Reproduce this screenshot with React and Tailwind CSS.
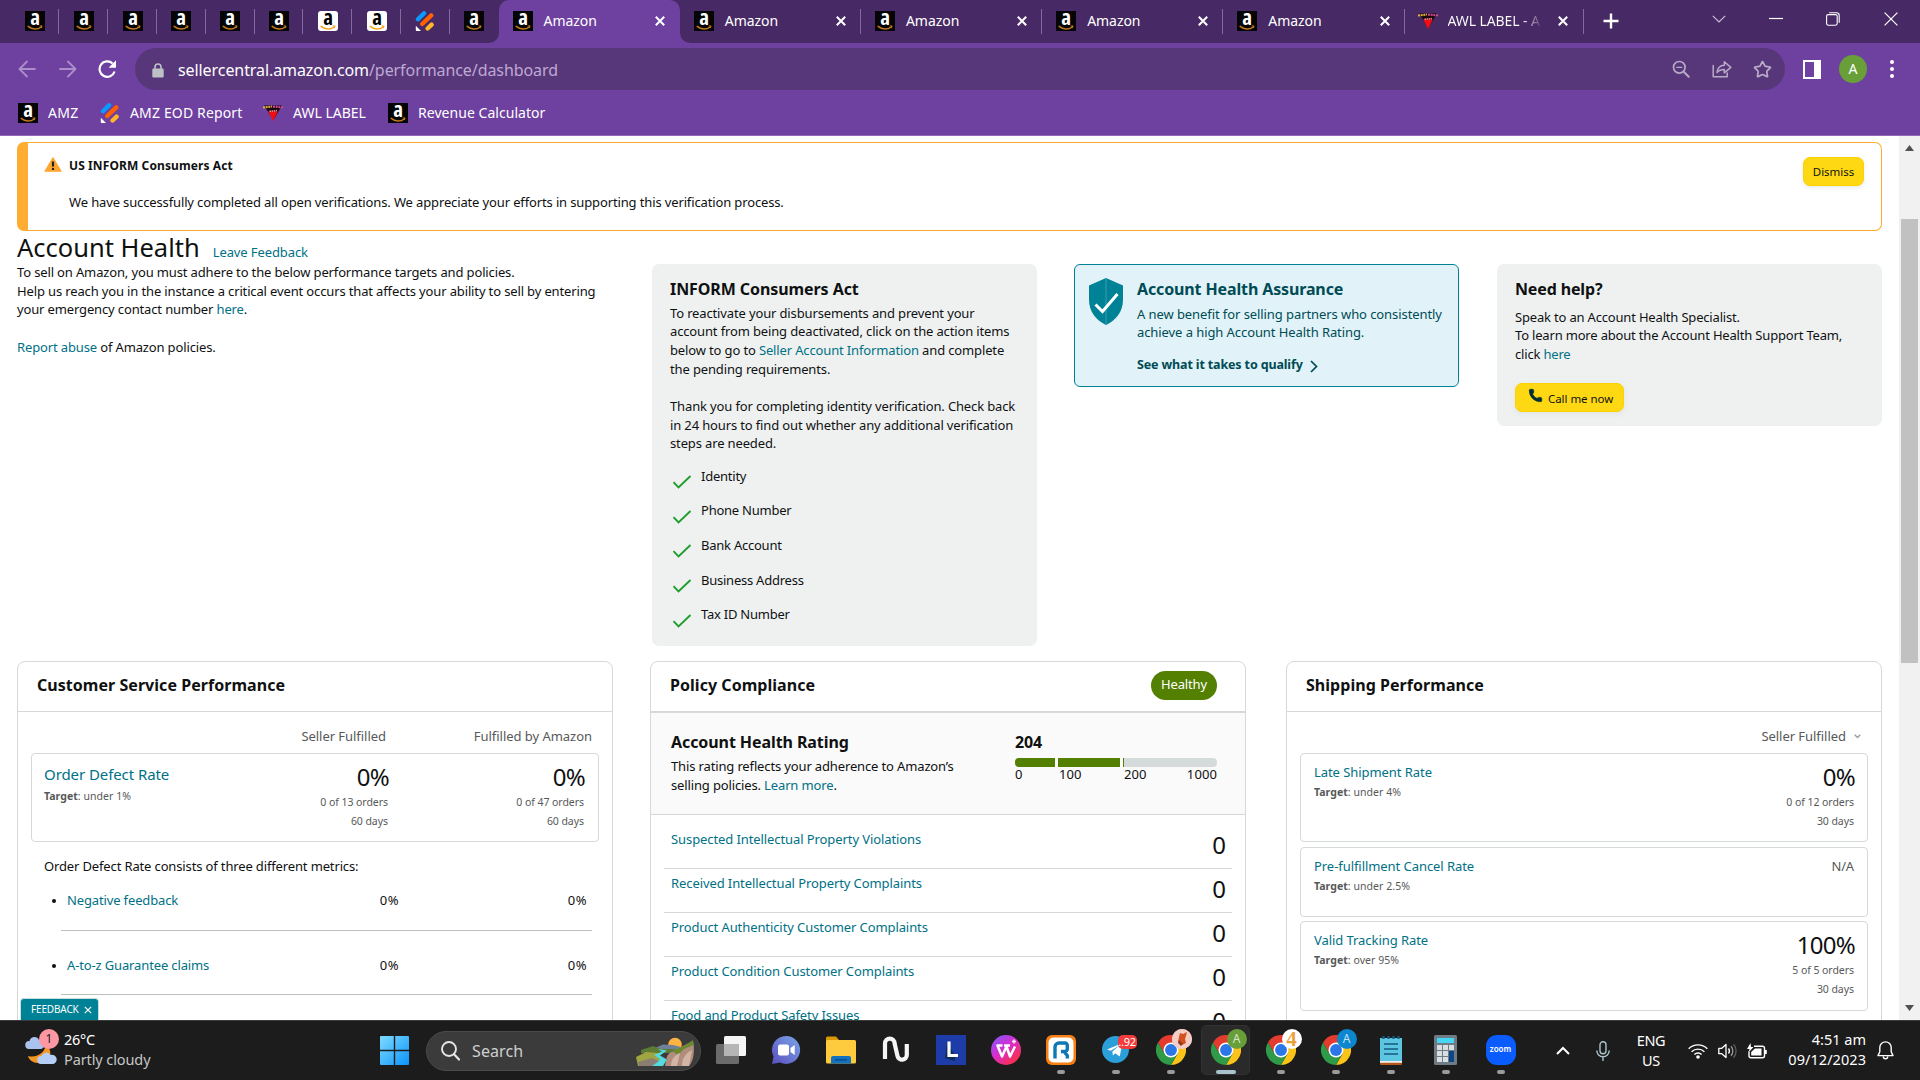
import { Phone, Star } from 'lucide-react';

const ICON_LINE = { fill: 'none', stroke: 'currentColor', strokeLinecap: 'round', strokeLinejoin: 'round' };

function AmazonIcon({ light = false }) {
  return (
    <svg width="20" height="20" viewBox="0 0 20 20" className="shrink-0 overflow-visible">
      <rect width="20" height="20" rx={light ? 3 : 0} fill={light ? '#ffffff' : '#050505'} />
      <text x="10" y="13.500" textAnchor="middle" className="font-['Open_Sans',sans-serif] text-[21px] font-bold [font-stretch:85%]" fill={light ? '#000000' : '#ffffff'}>a</text>
      <path d="M3.200 15.400c4 3.400 9.400 3.400 13 .6" fill="none" stroke={light ? '#f7a31c' : '#c47a1c'} strokeWidth="1.500" strokeLinecap="round" />
      <path d="M14.600 15l2.500-.1-.8 2.200" fill="none" stroke={light ? '#f7a31c' : '#c47a1c'} strokeWidth="1" />
    </svg>
  );
}

function FormIcon() {
  return (
    <svg width="20" height="20" viewBox="0 0 20 20" className="shrink-0">
      <g strokeLinecap="round" strokeWidth="4.400">
        <path d="M3 8.200L9 2.300" stroke="#0a99ff" />
        <path d="M7.200 13L16.300 4.400" stroke="#ff6100" />
        <path d="M12.600 17.500l4-3.800" stroke="#ffb629" />
      </g>
      <path d="M.8 14.800v4.400q0 .8.8.8H6z" fill="#fff" />
    </svg>
  );
}

function AwlIcon() {
  return (
    <svg width="20" height="20" viewBox="0 0 20 20" className="shrink-0">
      <path d="M1 2.500h18L10.500 17z" fill="#1a0a10" />
      <path d="M5.200 8.500h9.600L10.200 18z" fill="#f20d12" />
      <path d="M0 4.500l9-1" stroke="#e0b13c" strokeWidth="2" strokeDasharray="2 .7" />
      <path d="M10 3.700l10 .6" stroke="#d24a94" strokeWidth="2" strokeDasharray="2 .7" />
      <path d="M6.500 8.300l7.500-.7" stroke="#ff8d92" strokeWidth="1.500" strokeDasharray="1.600 .6" />
    </svg>
  );
}

function CloseX() {
  return (
    <svg width="12" height="12" viewBox="0 0 12 12" className="shrink-0 text-white">
      <path d="M1.800 1.800l8.400 8.400M10.200 1.800l-8.400 8.400" stroke="currentColor" strokeWidth="2" fill="none" />
    </svg>
  );
}

const PINNED = ['a', 'a', 'a', 'a', 'a', 'a', 'light', 'light', 'form', 'a'];

function PinnedTab({ kind, divider }) {
  return (
    <div className="relative flex w-[48.8px] items-center justify-center pb-px">
      {kind === 'form' ? <FormIcon /> : <AmazonIcon light={kind === 'light'} />}
      {divider && <span className="absolute top-[9px] right-0 h-[25px] w-px bg-[#83699d]" />}
    </div>
  );
}

function WideTab({ title, divider }) {
  return (
    <div className="relative flex w-[181.200px] items-center pb-px pl-[14px]">
      <AmazonIcon />
      <span className="mb-px ml-[11px] flex-1 text-[14px] leading-5 tracking-[-0.050px]">{title}</span>
      <span className="mr-[14px] flex"><CloseX /></span>
      {divider && <span className="absolute top-[9px] right-0 h-[25px] w-px bg-[#83699d]" />}
    </div>
  );
}

function TabStrip() {
  return (
    <div className="flex h-[43px] shrink-0 bg-[#6e40a0] text-white">
      <div className="flex w-[498.600px] shrink-0 rounded-br-[10px] bg-[#472a65] pl-[10.600px]">
        {PINNED.map((k, i) => <PinnedTab key={i} kind={k} divider={i < 9} />)}
      </div>
      <div className="flex shrink-0 bg-[linear-gradient(#472a65_50%,#6e40a0_50%)]">
        <div className="flex rounded-t-[10px] bg-[#6e40a0]"><WideTab title="Amazon" /></div>
      </div>
      <div className="flex flex-1 rounded-bl-[10px] bg-[#472a65]">
        <WideTab title="Amazon" divider />
        <WideTab title="Amazon" divider />
        <WideTab title="Amazon" divider />
        <WideTab title="Amazon" divider />
        <div className="relative flex w-[179px] items-center pb-px pl-[13px]">
          <AwlIcon />
          <span className="mb-px ml-[10px] w-[98px] overflow-hidden bg-[linear-gradient(90deg,#fff_76%,transparent_97%)] bg-clip-text text-[14px] leading-5 tracking-[-0.100px] whitespace-nowrap text-transparent">AWL LABEL - A</span>
          <span className="ml-[11px] flex"><CloseX /></span>
          <span className="absolute top-[9px] right-0 h-[25px] w-px bg-[#83699d]" />
        </div>
        <div className="flex w-[54px] items-center justify-center pb-px">
          <svg width="16" height="16" viewBox="0 0 16 16"><path d="M8 .5v15M.5 8h15" stroke="#fff" strokeWidth="2.400" /></svg>
        </div>
        <div className="mb-[5px] ml-auto flex items-center pr-[22px]">
          <svg width="14" height="8" viewBox="0 0 14 8" className="mr-[43px]"><path d="M.8.8L7 7 13.200.8" stroke="#c9bdd6" strokeWidth="1.200" fill="none" /></svg>
          <svg width="14" height="8" viewBox="0 0 14 8" className="mr-[43px]"><path d="M0 3.500h14" stroke="#fff" strokeWidth="1.200" /></svg>
          <svg width="14" height="14" viewBox="0 0 14 14" className="mr-[44px]"><g fill="none" stroke="#fff" strokeWidth="1.100"><rect x=".6" y="2.600" width="10.600" height="10.600" rx="1.600" /><path d="M3.200.8h7.400a2.600 2.600 0 0 1 2.600 2.600v7.400" /></g></svg>
          <svg width="14" height="14" viewBox="0 0 14 14"><path d="M.6.6l12.800 12.800M13.400.6L.6 13.400" stroke="#fff" strokeWidth="1.200" /></svg>
        </div>
      </div>
    </div>
  );
}

function Toolbar() {
  return (
    <div className="flex h-[52px] shrink-0 items-center bg-[#6e40a0] text-white">
      <svg width="18" height="18" viewBox="0 0 18 18" className="ml-[18px] text-[#ab8fca]"><path d="M17 9H2M9 1.500L1.500 9 9 16.500" {...ICON_LINE} strokeWidth="1.800" /></svg>
      <svg width="18" height="18" viewBox="0 0 18 18" className="ml-[23px] text-[#ab8fca]"><path d="M1 9h15M9 1.500L16.500 9 9 16.500" {...ICON_LINE} strokeWidth="1.800" /></svg>
      <svg width="19" height="18" viewBox="0 0 19 18" className="ml-[21px]"><path d="M16.600 11.500A7.700 7.700 0 1 1 14.600 3.500" fill="none" stroke="#fff" strokeWidth="2.200" /><path d="M18 .3v7.400h-7.400z" fill="#fff" /></svg>
      <div className="ml-[18px] flex h-[42px] w-[1650px] items-center rounded-full bg-[#57377a]">
        <svg width="12" height="15" viewBox="0 0 12 15" className="mt-[2px] ml-[17px]"><path d="M3 6V4a3 3 0 0 1 6 0v2" fill="none" stroke="#bdc1c6" strokeWidth="1.600" /><rect x=".3" y="5.500" width="11.400" height="9" rx="1.300" fill="#bdc1c6" /></svg>
        <span className="mt-px ml-[14px] text-[16px] leading-6 tracking-[-0.080px]">sellercentral.amazon.com<span className="text-[#bda9d3]">/performance/dashboard</span></span>
        <svg width="18" height="18" viewBox="0 0 18 18" className="mr-[22px] ml-auto text-[#b9aac8]"><g {...ICON_LINE} strokeWidth="1.700"><circle cx="7.300" cy="7.300" r="5.800" /><path d="M11.700 11.700l5 5" strokeWidth="2" /><path d="M4.800 7.300h5" strokeWidth="1.300" /></g></svg>
        <svg width="20" height="18" viewBox="0 0 20 18" className="mr-[21px] text-[#b9aac8]"><g {...ICON_LINE} strokeWidth="1.500"><path d="M1.200 5.500v11.300h14V13" /><path d="M5 12.500c.5-4.500 3-7 7.300-7.200V1.800l6.500 5.600-6.500 5.400V9.400c-3.300 0-5.500.8-7.300 3.100z" /></g></svg>
        <Star size={19} strokeWidth={2.200} className="mr-[13px] text-[#b9aac8]" />
      </div>
      <div className="ml-[18px] h-[19px] w-[18px] border-2 border-r-[7px] border-white" />
      <div className="ml-[18px] flex size-7 items-center justify-center rounded-full bg-[#689f38] text-[14px] leading-none">A</div>
      <div className="ml-[23px] flex flex-col gap-[3px]">
        <span className="size-[4px] rounded-full bg-white" /><span className="size-[4px] rounded-full bg-white" /><span className="size-[4px] rounded-full bg-white" />
      </div>
    </div>
  );
}

function Bookmarks() {
  return (
    <div className="flex h-[41px] shrink-0 items-center border-b border-[#9368ba] bg-[#6e40a0] pb-[5px] pl-[18px] text-[14px] leading-5 text-white">
      <AmazonIcon /><span className="ml-[10px] w-[52px] tracking-[0.300px]">AMZ</span>
      <FormIcon /><span className="ml-[10px] w-[133px] tracking-[0.150px]">AMZ EOD Report</span>
      <AwlIcon /><span className="ml-[10px] w-[95px]">AWL LABEL</span>
      <AmazonIcon /><span className="ml-[10px] tracking-[0.040px]">Revenue Calculator</span>
    </div>
  );
}

function Alert() {
  return (
    <div className="mt-[6px] flex h-[89px] shrink-0 rounded-[7px] border border-l-[11px] border-[#ffac33]">
      <svg width="18" height="15" viewBox="0 0 18 15" className="mt-[14px] ml-[16px]"><path d="M9 .8L17 14.200H1z" fill="#ffa62f" stroke="#ffa62f" strokeWidth="1.200" strokeLinejoin="round" /><path d="M9 4.500v5" stroke="#222" strokeWidth="2.200" /><circle cx="9" cy="11.900" r="1.200" fill="#222" /></svg>
      <div className="ml-[7px] flex-1">
        <p className="mt-[13px] text-[12px] leading-5 font-bold tracking-[0.100px]">US INFORM Consumers Act</p>
        <p className="mt-[16px] text-[13px] leading-5 tracking-[-0.135px]">We have successfully completed all open verifications. We appreciate your efforts in supporting this verification process.</p>
      </div>
      <button className="mt-[14px] mr-[17px] h-[29px] w-[61px] rounded-[7px] border border-[#fcd200] bg-[#ffd814] text-[11.500px] tracking-[-0.050px] shadow-[0_2px_4px_rgba(213,217,217,0.500)]">Dismiss</button>
    </div>
  );
}

const Link = ({ children }) => <a className="text-[#007185]">{children}</a>;

const CHECKS = ['Identity', 'Phone Number', 'Bank Account', 'Business Address', 'Tax ID Number'];

function TopCards() {
  return (
    <div className="flex h-[383px] shrink-0 items-start text-[13px] leading-[18.700px] tracking-[-0.140px]">
      <div className="w-[598px]">
        To sell on Amazon, you must adhere to the below performance targets and policies.<br />
        Help us reach you in the instance a critical event occurs that affects your ability to sell by entering<br />
        your emergency contact number <Link>here</Link>.<br /><br />
        <Link>Report abuse</Link> of Amazon policies.
      </div>
      <div className="mt-px ml-[37px] h-[382px] w-[385px] rounded-[7px] bg-[#eff1f1] pt-[15px] pl-[18px]">
        <h3 className="text-[16px] leading-5 font-bold tracking-[-0.080px]">INFORM Consumers Act</h3>
        <p className="mt-[4.500px] whitespace-nowrap">
          To reactivate your disbursements and prevent your<br />
          account from being deactivated, click on the action items<br />
          below to go to <Link>Seller Account Information</Link> and complete<br />
          the pending requirements.<br /><br />
          Thank you for completing identity verification. Check back<br />
          in 24 hours to find out whether any additional verification<br />
          steps are needed.
        </p>
        <ul className="mt-[5.500px]">
          {CHECKS.map((c) => (
            <li key={c} className="flex h-[34.700px] items-center">
              <svg width="20" height="14" viewBox="0 0 20 14" className="mt-[12px] ml-[2px]"><path d="M1.500 7.200l5 5.200L18.500 1" fill="none" stroke="#1f9d2c" strokeWidth="1.900" /></svg>
              <span className="ml-[9px] tracking-[-0.240px]">{c}</span>
            </li>
          ))}
        </ul>
      </div>
      <div className="mt-px ml-[37px] flex h-[123px] w-[385px] rounded-[6px] border border-[#008296] bg-[#e1f3f8] text-[#004b55]">
        <svg width="34" height="47" viewBox="0 0 34 47" className="mt-[13px] ml-[14px]"><path d="M17 0l17 7.500v14C34 34 27 42 17 47 7 42 0 34 0 21.500v-14z" fill="#008296" /><path d="M17 0v47" stroke="#3ba0b0" strokeWidth="1" /><path d="M6.500 26.500l7 7L28.500 16" fill="none" stroke="#fff" strokeWidth="3" /></svg>
        <div className="ml-[14px] whitespace-nowrap">
          <h3 className="mt-[14px] text-[16px] leading-5 font-bold tracking-[-0.130px]">Account Health Assurance</h3>
          <p className="mt-[6px] leading-[18.300px] tracking-[-0.080px]">A new benefit for selling partners who consistently<br />achieve a high Account Health Rating.</p>
          <p className="mt-[14px] flex items-center text-[12.500px] font-bold">See what it takes to qualify
            <svg width="8" height="13" viewBox="0 0 8 13" className="mt-[3px] ml-[7px]"><path d="M1 1l5.500 5.500L1 12" fill="none" stroke="currentColor" strokeWidth="1.700" /></svg>
          </p>
        </div>
      </div>
      <div className="mt-px ml-[38px] h-[162px] w-[385px] rounded-[7px] bg-[#eff1f1] pt-[15px] pl-[18px]">
        <h3 className="text-[16px] leading-5 font-bold">Need help?</h3>
        <p className="mt-[8.500px] whitespace-nowrap tracking-[-0.180px]">Speak to an Account Health Specialist.<br />To learn more about the Account Health Support Team,<br />click <Link>here</Link></p>
        <button className="mt-[19.500px] flex h-[29px] w-[109px] items-center rounded-[7px] border border-[#fcd200] bg-[#ffd814] pl-[12px] text-[11.500px] tracking-[-0.050px] shadow-[0_2px_4px_rgba(213,217,217,0.500)]">
          <Phone size={15} fill="#002f36" stroke="#002f36" strokeWidth={1} className="mb-[4px]" />
          <span className="mt-[3px] ml-[5px]">Call me now</span>
        </button>
      </div>
    </div>
  );
}

function Stat({ value, lines, className }) {
  return (
    <div className={`text-right ${className}`}>
      <p className="-mr-px text-[24px] leading-[26px] tracking-[-0.700px] text-[#0f1111]">{value}</p>
      <div className="mt-[3px] text-[10.500px] leading-[19px] tracking-[-0.050px] text-[#565959]">{lines.map((l) => <p key={l}>{l}</p>)}</div>
    </div>
  );
}

function Card({ title, badge, children, thick }) {
  return (
    <section className="h-[380px] w-[596px] shrink-0 rounded-t-[8px] border border-[#d5d9d9] tracking-[-0.140px]">
      <header className={`flex items-start justify-between border-[#d5d9d9] pl-[19px] ${thick ? 'h-[51px] border-b-2' : 'h-[50px] border-b'}`}>
        <h2 className="mt-[13px] text-[16px] leading-5 font-bold tracking-[0.040px]">{title}</h2>
        {badge}
      </header>
      {children}
    </section>
  );
}

function MetricLine({ name }) {
  return (
    <div className="flex items-center leading-5">
      <span className="mt-[2px] mr-[11px] size-[4px] rounded-full bg-[#0f1111]" />
      <Link>{name}</Link>
      <span className="ml-auto tracking-[0.500px]">0%</span>
      <span className="w-[188px] text-right tracking-[0.500px]">0%</span>
    </div>
  );
}

function CustomerService() {
  return (
    <Card title="Customer Service Performance">
      <div className="mt-[14px] flex pr-[20px] text-[13px] leading-5 tracking-[-0.040px] text-[#565959]">
        <span className="ml-auto">Seller Fulfilled</span>
        <span className="w-[206px] text-right">Fulfilled by Amazon</span>
      </div>
      <div className="mx-[13px] mt-[7px] flex h-[89px] rounded-[4px] border border-[#d5d9d9] pl-[12px]">
        <div>
          <p className="mt-[10px] text-[15px] leading-5 tracking-[-0.080px]"><Link>Order Defect Rate</Link></p>
          <p className="mt-[3px] text-[10.500px] leading-[18px] tracking-[0.050px] text-[#565959]"><b>Target</b>: under 1%</p>
        </div>
        <Stat className="mt-[10px] ml-auto" value="0%" lines={['0 of 13 orders', '60 days']} />
        <Stat className="mt-[10px] mr-[14px] w-[196px]" value="0%" lines={['0 of 47 orders', '60 days']} />
      </div>
      <div className="pr-[20px] pl-[26px] text-[13px]">
        <p className="mt-[14px] leading-5">Order Defect Rate consists of three different metrics:</p>
        <div className="mt-[14px] pr-[5px] pl-[8px]"><MetricLine name="Negative feedback" /></div>
        <div className="mt-[20px] ml-[17px] h-px bg-[#bbbfbf]" />
        <div className="mt-[24px] pr-[5px] pl-[8px]"><MetricLine name="A-to-z Guarantee claims" /></div>
        <div className="mt-[19px] ml-[17px] h-px bg-[#bbbfbf]" />
      </div>
    </Card>
  );
}

const POLICIES = [
  'Suspected Intellectual Property Violations',
  'Received Intellectual Property Complaints',
  'Product Authenticity Customer Complaints',
  'Product Condition Customer Complaints',
  'Food and Product Safety Issues',
];

function PolicyCompliance() {
  return (
    <Card title="Policy Compliance" thick badge={<span className="mt-[9px] mr-[28px] h-[29px] w-[66px] rounded-full bg-[#538000] text-center text-[13px] leading-[27px] text-white">Healthy</span>}>
      <div className="flex h-[102px] border-b border-[#d5d9d9] bg-[#fafafa] pl-[20px]">
        <div className="w-[344px]">
          <h3 className="mt-[19px] text-[16px] leading-5 font-bold tracking-[-0.080px]">Account Health Rating</h3>
          <p className="mt-[5px] text-[13px] leading-[18.700px]">This rating reflects your adherence to Amazon’s<br />selling policies. <Link>Learn more</Link>.</p>
        </div>
        <div className="w-[202px]">
          <p className="mt-[19px] text-[16px] leading-5 font-bold">204</p>
          <div className="mt-[6px] flex h-[9px] gap-[3px] overflow-hidden rounded-[4px] bg-white">
            <span className="w-[40px] bg-[#538000]" />
            <span className="w-[62px] bg-[#538000]" />
            <span className="flex-1 border-l border-[#538000] bg-[#d5dbdb]" />
          </div>
          <div className="-mt-px flex text-[13px] leading-[17px] tracking-[0.100px]">
            <span className="w-[44px]">0</span><span className="w-[65px]">100</span><span>200</span><span className="ml-auto">1000</span>
          </div>
        </div>
      </div>
      <ul className="mx-[13px] mt-[10px]">
        {POLICIES.map((p) => (
          <li key={p} className="flex h-[44px] justify-between border-b border-[#d5d9d9] pr-[6px] pl-[7px]">
            <span className="mt-[4px] text-[13px] leading-5 tracking-[-0.090px]"><Link>{p}</Link></span>
            <span className="mt-[7px] text-[24px] leading-[26px] tracking-[0]">0</span>
          </li>
        ))}
      </ul>
    </Card>
  );
}

function ShipBox({ name, target, className, children }) {
  return (
    <div className={`mx-[13px] flex justify-between rounded-[4px] border border-[#d5d9d9] pr-[13px] pl-[13px] ${className}`}>
      <div>
        <p className="mt-[8px] text-[13px] leading-5 tracking-[-0.060px]"><Link>{name}</Link></p>
        <p className="mt-px text-[10.500px] leading-[18px] tracking-[0.050px] text-[#565959]"><b>Target</b>: {target}</p>
      </div>
      {children}
    </div>
  );
}

function Shipping() {
  return (
    <Card title="Shipping Performance">
      <div className="mt-[14px] flex items-center justify-end pr-[20px] text-[13px] leading-5 tracking-[-0.040px] text-[#565959]">
        Seller Fulfilled
        <svg width="7" height="5" viewBox="0 0 7 5" className="ml-[8px]"><path d="M.7.8l2.800 2.700L6.300.8" fill="none" stroke="#9a9d9d" strokeWidth="1.400" /></svg>
      </div>
      <ShipBox name="Late Shipment Rate" target="under 4%" className="mt-[7px] h-[89px]"><Stat className="mt-[10px]" value="0%" lines={['0 of 12 orders', '30 days']} /></ShipBox>
      <ShipBox name="Pre-fulfillment Cancel Rate" target="under 2.5%" className="mt-[5px] h-[70px]"><span className="mt-[8px] text-[13px] leading-5 text-[#565959]">N/A</span></ShipBox>
      <ShipBox name="Valid Tracking Rate" target="over 95%" className="mt-[4px] h-[90px]"><Stat className="mt-[10px]" value="100%" lines={['5 of 5 orders', '30 days']} /></ShipBox>
    </Card>
  );
}

function Page() {
  return (
    <div className="relative flex min-h-0 flex-1 bg-white text-[#0f1111]">
      <main className="flex min-w-0 flex-1 flex-col overflow-hidden pr-[17px] pl-[17px]">
        <Alert />
        <div className="mt-px mb-px flex h-[30px] shrink-0 items-baseline">
          <h1 className="text-[25.500px] leading-[30px]">Account Health</h1>
          <span className="ml-[13px] text-[13px] tracking-[-0.100px]"><Link>Leave Feedback</Link></span>
        </div>
        <TopCards />
        <div className="mt-[15px] flex shrink-0 gap-[37px]">
          <CustomerService />
          <PolicyCompliance />
          <div className="ml-[3px]"><Shipping /></div>
        </div>
      </main>
      <div className="flex w-[21px] flex-col items-center bg-[#f1f1f1]">
        <svg width="9" height="6" viewBox="0 0 9 6" className="mt-[9px]"><path d="M4.500 0L9 6H0z" fill="#505050" /></svg>
        <div className="mt-[68px] h-[444px] w-[17px] bg-[#c1c1c1]" />
        <svg width="9" height="6" viewBox="0 0 9 6" className="mt-auto mb-[9px]"><path d="M0 0h9L4.500 6z" fill="#505050" /></svg>
      </div>
      <div className="absolute bottom-0 left-[20px] flex h-[22px] w-[79px] items-center rounded-t-[4px] border border-b-0 border-[#c8dfe2] bg-[#008296] pl-[10px] text-[10px] text-white">
        <span className="tracking-[-0.150px]">FEEDBACK</span>
        <svg width="8" height="8" viewBox="0 0 8 8" className="ml-[5px]"><path d="M.8.8l6.400 6.400M7.200.8L.8 7.200" stroke="#fff" strokeWidth="1.200" /></svg>
      </div>
    </div>
  );
}

function ChromeIcon({ badge, bg, fg }) {
  return (
    <div className="relative size-[30px]">
      <svg width="30" height="30" viewBox="0 0 48 48">
        <path d="M3.200 12A24 24 0 0 1 44.800 12L24 12 13.600 30z" fill="#e33b2e" />
        <path d="M44.800 12A24 24 0 0 1 24 48L34.400 30 24 12z" fill="#fcc418" />
        <path d="M24 48A24 24 0 0 1 3.200 12L13.600 30h20.800z" fill="#2f9a48" />
        <circle cx="24" cy="24" r="12" fill="#fff" /><circle cx="24" cy="24" r="9.500" fill="#2c77e8" />
      </svg>
      <span className={`absolute -top-[6px] left-[16px] flex size-5 items-center justify-center rounded-full text-[12px] leading-none ${bg} ${fg}`}>{badge}</span>
    </div>
  );
}

const PhotoMark = () => (
  <svg width="20" height="20" viewBox="0 0 20 20"><circle cx="10" cy="10" r="10" fill="#f4cdc6" /><path d="M8 4l3 1 4-2-1 4-1 3 1 4-4 2-4-3 1-5z" fill="#d4521f" /><path d="M7 11l4 4-2 2-3-3z" fill="#8a3a20" /></svg>
);

const RUNNING_ICONS = [
  { key: 'task', el: <svg width="30" height="28" viewBox="0 0 30 28"><rect x="8" y="0" width="22" height="20" rx="1.500" fill="#f4f4f4" /><rect x="0" y="8" width="23" height="20" rx="1.500" fill="#6b6b6b" /><path d="M8 8h15v12H8z" fill="#b5b5b5" /></svg> },
  { key: 'chat', el: <svg width="30" height="30" viewBox="0 0 30 30"><defs><linearGradient id="chat" x1="0" y1="1" x2="1" y2="0"><stop stopColor="#5b4fc0" /><stop offset="1" stopColor="#7aa5e8" /></linearGradient></defs><path d="M15 1a14 14 0 1 1-6 26.600L1 29l1.500-7.500A14 14 0 0 1 15 1z" fill="url(#chat)" /><rect x="7" y="9.500" width="11" height="11" rx="2" fill="#fff" /><path d="M19.500 13l4.200-3v10l-4.200-3z" fill="#fff" /></svg> },
  { key: 'files', el: <svg width="30" height="28" viewBox="0 0 30 28"><path d="M0 2a1.500 1.500 0 0 1 1.500-1.500h8.500l3 3.500v6H0z" fill="#d99a06" /><rect x="0" y="4" width="30" height="23.500" rx="1.500" fill="#fecb3e" /><path d="M5 27.500V22a2 2 0 0 1 2-2h16a2 2 0 0 1 2 2v5.500z" fill="#1272bf" /><path d="M9 23.800h12" stroke="#0a4d8c" strokeWidth="1.500" /></svg> },
  { key: 'nord', el: <svg width="28" height="28" viewBox="0 0 28 28"><path d="M3 23V7.500a4.800 4.800 0 0 1 9.600 0L15.500 20a4.700 4.700 0 0 0 9.300-1V8" fill="none" stroke="#f5f5f5" strokeWidth="4.200" /></svg> },
  { key: 'l', el: <svg width="30" height="30" viewBox="0 0 30 30"><rect width="30" height="30" fill="#1e3ca8" /><path d="M11 7l-2 16 10 3V21z" fill="#0d2d57" /><path d="M13 6.500V20.500h9" fill="none" stroke="#fff" strokeWidth="3.200" /></svg> },
  { key: 'wps', el: <svg width="30" height="30" viewBox="0 0 30 30"><defs><linearGradient id="wps" x1="0" y1="0" x2=".8" y2="1"><stop stopColor="#7a5cff" /><stop offset=".5" stopColor="#d92ccd" /><stop offset="1" stopColor="#ff3038" /></linearGradient></defs><circle cx="15" cy="15" r="15" fill="url(#wps)" /><path d="M11.500 10.500H6.500l4.500 11 4.500-10 3.500 10L24 11.500M13 10.500h6" fill="none" stroke="#fff" strokeWidth="2.500" strokeLinejoin="round" /><path d="M23 4.500v4M21 6.500h4" stroke="#fff" strokeWidth="1.300" /></svg> },
  { key: 'rc', dot: true, el: <svg width="30" height="30" viewBox="0 0 30 30"><rect width="30" height="30" rx="6" fill="#f77f13" /><rect x="2.500" y="2.500" width="25" height="25" rx="5" fill="#fff" /><path d="M9 23.500V12a4 4 0 0 1 4-4H19a2.300 2.300 0 0 1 2.300 2.300v3.700a2.500 2.500 0 0 1-2.500 2.500H15M18 16.500l3.300 4v3" fill="none" stroke="#0e79b2" strokeWidth="3.400" /></svg> },
  { key: 'tg', dot: true, el: <div className="relative size-[28px]"><svg width="27" height="27" viewBox="0 0 27 27"><circle cx="13.500" cy="13.500" r="13.500" fill="#2b9fd9" /><path d="M5 13.500L20.500 7l-2.800 13.500-4.500-3.300-2.300 2.200-.5-4 7-6-8.700 5.400z" fill="#fff" /></svg><span className="absolute -top-[1px] left-[16px] h-[14px] w-[19px] rounded-[5px] bg-[#f23b3a] text-center text-[11px] leading-[14px] tracking-[-0.300px] text-white">..92</span></div> },
  { key: 'c1', dot: true, el: <ChromeIcon badge={<PhotoMark />} bg="bg-[#f2c9c0]" fg="text-white" /> },
  { key: 'c2', active: true, el: <ChromeIcon badge="A" bg="bg-[#689f38]" fg="text-[#d5e5c8]" /> },
  { key: 'c3', dot: true, el: <ChromeIcon badge={<span className="font-['Liberation_Serif',serif] text-[21px] font-bold">4</span>} bg="bg-white" fg="text-[#e9a23b]" /> },
  { key: 'c4', dot: true, el: <ChromeIcon badge="A" bg="bg-[#0c86cf]" fg="text-[#bfe2f7]" /> },
  { key: 'note', dot: true, el: <svg width="22" height="30" viewBox="0 0 22 30"><rect y="3" width="22" height="24" fill="#5cc5e0" /><rect y="26" width="22" height="2" fill="#f0f0f0" /><rect y="27.800" width="22" height="2.200" rx="1" fill="#b3591c" /><g stroke="#155a80" strokeWidth="1.600"><path d="M4 9h14M4 14h14M4 19h14" /><path d="M3.500 1v3M8.500 1v3M13.500 1v3M18.500 1v3" strokeWidth="2.200" /></g></svg> },
  { key: 'calc', dot: true, el: <svg width="23" height="30" viewBox="0 0 23 30"><rect width="23" height="30" rx="1.500" fill="#6f7b85" /><rect x="3" y="3" width="17" height="5" fill="#45d5f5" /><g fill="#d9dee2"><path d="M3 10h5v5H3zM9 10h5v5H9zM15 10h5v5h-5zM3 16h5v5H3zM9 16h5v5H9zM3 22h5v5H3zM9 22h5v5H9z" /></g><path d="M15 16h5v11h-5z" fill="#0d4585" /></svg> },
  { key: 'zoom', dot: true, el: <span className="flex size-[30px] items-center justify-center rounded-[11px] bg-[#0b5cff] pb-[2px] text-[8px] leading-none font-semibold text-white">zoom</span> },
];

function Taskbar() {
  return (
    <footer className="flex h-[60px] shrink-0 items-center border-t border-[#383c38] bg-[#1c1c1c] text-[15px] text-white">
      <div className="flex w-[380px] items-center pb-[2px] pl-[24px]">
        <div className="relative">
          <svg width="34" height="34" viewBox="0 0 34 34"><path d="M22 12a10 10 0 0 1-8 18c-5 0-9-3-10-7 8 2 16-2 18-11z" fill="#f4961f" /><path d="M5 16a4 4 0 0 1 .500-8 5 5 0 0 1 9.500-1 4.500 4.500 0 0 1 2 9z" fill="#a9c3ee" /><path d="M17 31a4 4 0 0 1 .500-8 5 5 0 0 1 9-1 4.500 4.500 0 0 1 3 9z" fill="#b4cef5" /></svg>
          <span className="absolute -top-[4px] left-[15px] flex size-5 items-center justify-center rounded-full bg-[#fc97a3] text-[12px] leading-none text-[#1c1c1c]">1</span>
        </div>
        <div className="mb-px ml-[6px] text-[14.500px] leading-5"><p className="tracking-[-0.300px]">26°C</p><p className="tracking-[-0.100px] text-[#c6c6c6]">Partly cloudy</p></div>
      </div>
      <svg width="29" height="29" viewBox="0 0 29 29"><defs><linearGradient id="win" x1="0" y1="0" x2="1" y2="1"><stop stopColor="#7fdcff" /><stop offset="1" stopColor="#0a93fb" /></linearGradient></defs><path d="M1 0h12.800v13.800H0V1a1 1 0 0 1 1-1zM15.200 0H28a1 1 0 0 1 1 1v12.800H15.200zM0 15.200h13.800V29H1a1 1 0 0 1-1-1zM15.200 15.200H29V28a1 1 0 0 1-1 1H15.200z" fill="url(#win)" /></svg>
      <div className="ml-[17px] flex h-[40px] w-[275px] items-center rounded-full border border-[#4b4b4b] bg-[#3b3b3b] pl-[14px]">
        <svg width="19" height="20" viewBox="0 0 19 20"><circle cx="8" cy="8" r="7" fill="none" stroke="#e6e6e6" strokeWidth="1.900" /><path d="M13 13.200l5 5.300" stroke="#e6e6e6" strokeWidth="2.200" strokeLinecap="round" /></svg>
        <span className="ml-[12px] text-[16px] tracking-[0.100px] text-[#cfcfcf]">Search</span>
        <svg width="62" height="30" viewBox="0 0 62 30" className="mr-[2px] ml-auto">
          <circle cx="39" cy="8.500" r="6.800" fill="#ffb340" />
          <path d="M19 12l8-3.500 10 .5 8 2-4 4H18z" fill="#71809a" />
          <path d="M5 14l12-4 8 3 16 0-8 4-28 0z" fill="#5d7b32" />
          <path d="M0 21l10-5 12 1 4 5-12 8H2z" fill="#9fa541" />
          <path d="M22 13l9 1.500-7 5 7 4-4 6.500H15l9-7-6-4 8-3.500z" fill="#53dbe0" />
          <path d="M2 26l14-4 7 3-7 5H3z" fill="#8c7d72" />
          <path d="M30 25c1-9 6-9 11-12l16-8c2 8 1 20-4 25H29z" fill="#b08d7d" />
          <path d="M36 15l12-5 9-6 .5 5-9.500 4-6 6z" fill="#6b8a2e" />
          <path d="M35 30c0-7 4-11 9-13l-3 13zM46 30c0-8 4-13 10-16l-3 16z" fill="#d3b5a5" />
        </svg>
      </div>
      <div className="ml-[2px] flex">
        {RUNNING_ICONS.map((it) => (
          <div key={it.key} className="relative flex h-[59px] w-[55px] items-center justify-center pb-px">
            {it.active && <span className="absolute top-[4px] left-[3px] h-[50px] w-[49px] rounded-[5px] border border-[#313131] bg-[#2a2a2a]" />}
            <span className="relative flex">{it.el}</span>
            {it.dot && <span className="absolute bottom-[6px] left-[24px] h-[4px] w-[8px] rounded-full bg-[#9a9a9a]" />}
            {it.active && <span className="absolute bottom-[6px] left-[18px] h-[4px] w-[20px] rounded-full bg-[#a9c4cc]" />}
          </div>
        ))}
      </div>
      <div className="ml-[15px] flex w-[40px] justify-center"><svg width="14" height="9" viewBox="0 0 14 9"><path d="M1 8l6-6 6 6" fill="none" stroke="#fff" strokeWidth="2" /></svg></div>
      <div className="flex w-[40px] justify-center"><svg width="14" height="20" viewBox="0 0 14 20"><g fill="none" stroke="#a9c4cc" strokeWidth="1.400"><rect x="4" y=".8" width="6" height="12" rx="3" /><path d="M.8 9.500a6.200 6.200 0 0 0 12.400 0M7 15.800V20" /></g></svg></div>
      <div className="mb-px w-[56px] text-center text-[14.500px] leading-5 tracking-[-0.300px]"><p>ENG</p><p>US</p></div>
      <div className="flex w-[38px] justify-center"><svg width="20" height="16" viewBox="0 0 20 16"><g fill="none" stroke="#fff" strokeWidth="1.400"><path d="M.7 5.800a13 13 0 0 1 18.600 0M3.600 8.800a9 9 0 0 1 12.800 0M6.400 11.600a5 5 0 0 1 7.200 0" /></g><circle cx="10" cy="14" r="1.800" fill="#fff" /></svg></div>
      <div className="flex w-[22px] justify-center"><svg width="20" height="16" viewBox="0 0 20 16"><g fill="none" strokeWidth="1.300"><path d="M.8 5.300h3L8 1.500v13l-4.200-3.800h-3z" stroke="#fff" strokeLinejoin="round" /><path d="M10.500 5.500a4 4 0 0 1 0 5" stroke="#fff" /><path d="M13 3.300a7 7 0 0 1 0 9.400" stroke="#9a9a9a" /><path d="M15.500 1.300a10 10 0 0 1 0 13.400" stroke="#5c5c5c" /></g></svg></div>
      <div className="flex w-[36px] justify-center"><svg width="20" height="16" viewBox="0 0 20 16"><path d="M7 3.200h8.500a2 2 0 0 1 2 2v7.600a2 2 0 0 1-2 2H4a2 2 0 0 1-2-2V8.500" fill="none" stroke="#fff" strokeWidth="1.400" /><path d="M8 5.500h6.500V12.500H4.200V9z" fill="#fff" /><path d="M18 7h1.800v4H18zM3.500 0L0 6h2.500L1.500 9.500 6.500 4H4z" fill="#fff" /></svg></div>
      <div className="mb-[3px] w-[91px] text-right text-[14.500px] leading-5 whitespace-nowrap"><p>4:51 am</p><p className="tracking-[0.050px]">09/12/2023</p></div>
      <div className="flex w-[38px] justify-center"><svg width="17" height="19" viewBox="0 0 17 19"><path d="M8.500.9a5.700 5.700 0 0 0-5.700 5.700v4.200L1 14.600h15l-1.800-3.800V6.600A5.700 5.700 0 0 0 8.500.9zM6.300 15.500a2.200 2.200 0 0 0 4.400 0" fill="none" stroke="#fff" strokeWidth="1.400" strokeLinejoin="round" /></svg></div>
    </footer>
  );
}

export default function App() {
  return (
    <div className="flex h-[1080px] w-[1920px] flex-col overflow-hidden font-['Noto_Sans','Open_Sans',sans-serif]">
      <TabStrip />
      <Toolbar />
      <Bookmarks />
      <Page />
      <Taskbar />
    </div>
  );
}
